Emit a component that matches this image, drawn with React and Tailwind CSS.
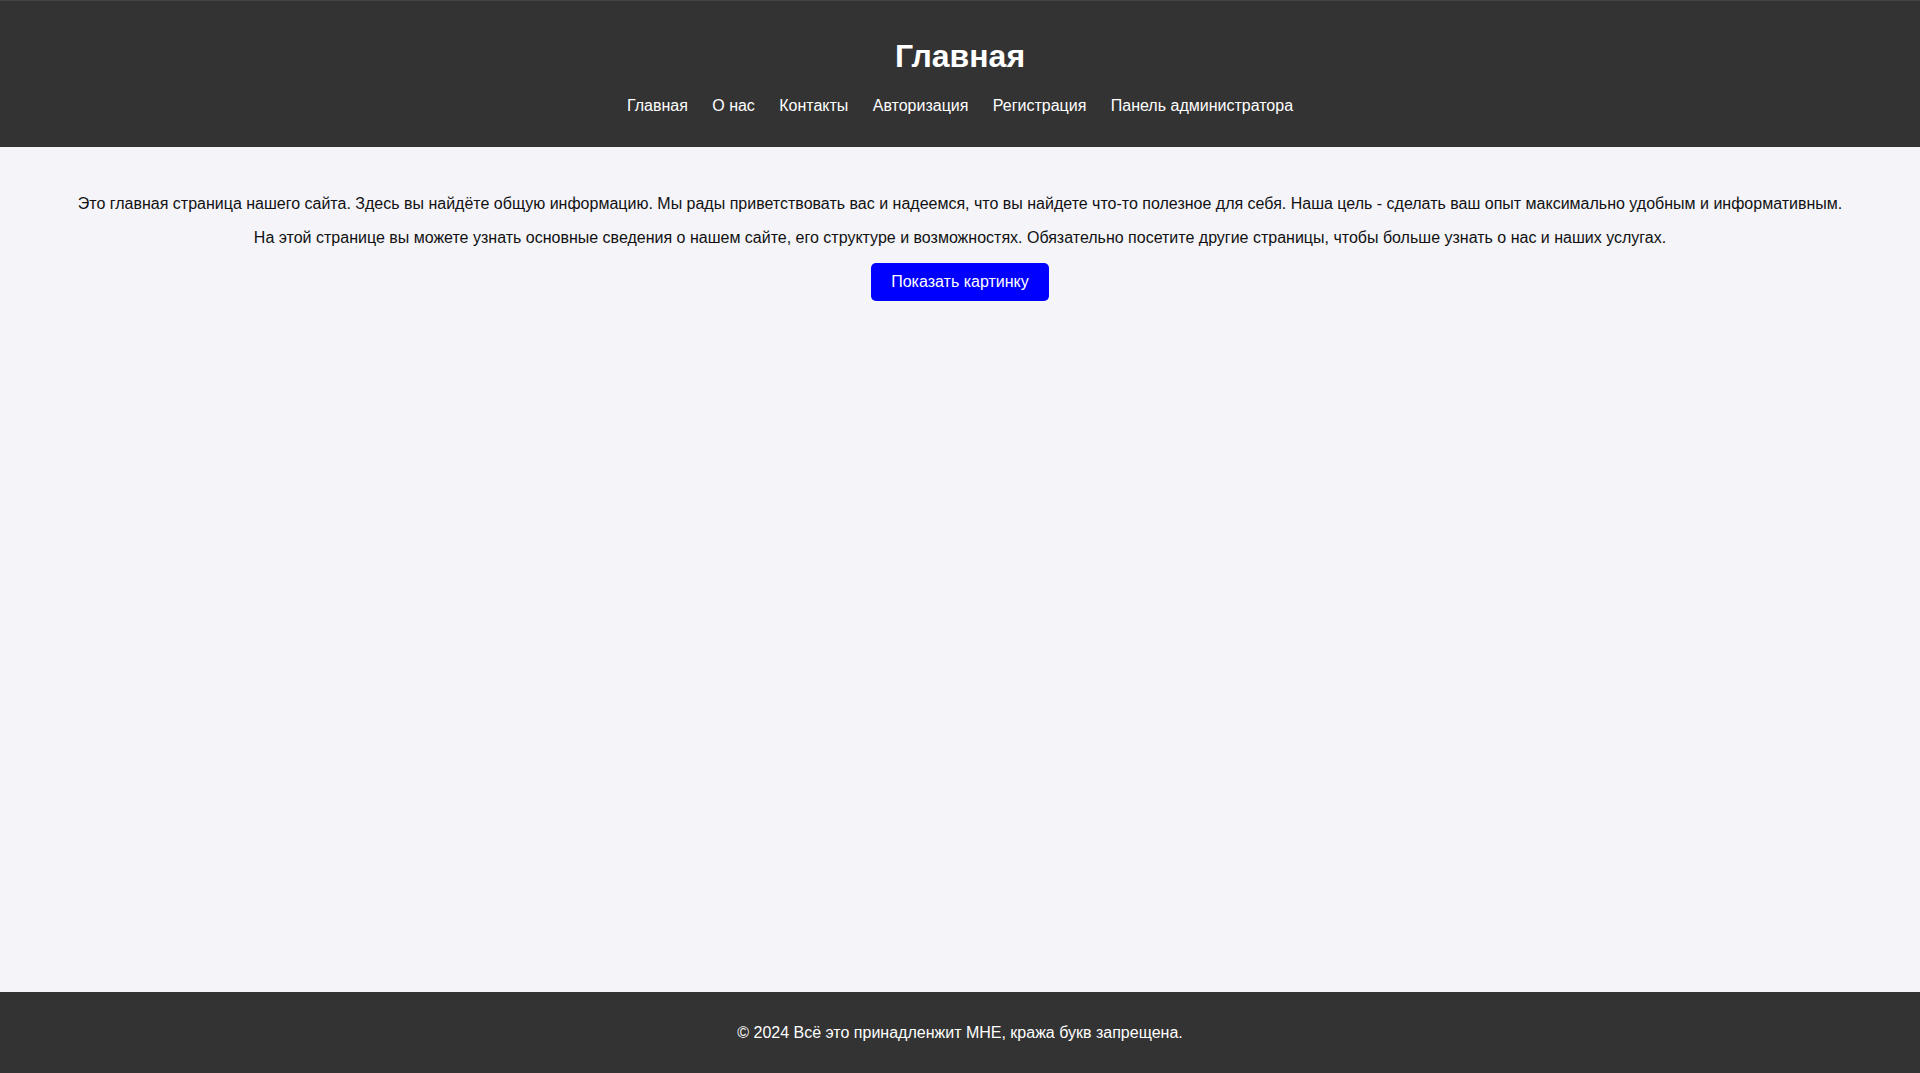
export default function App() {
  const links = ["Главная", "О нас", "Контакты", "Авторизация", "Регистрация", "Панель администратора"];
  return (
    <div className="min-h-screen flex flex-col bg-[#f4f4f9] text-[#111] text-[16px]" style={{ fontFamily: '"Liberation Sans", Arial, sans-serif' }}>
      <header className="h-[147px] bg-[#333333] border-t border-[#454545] text-white text-center pt-[37px]">
        <h1 className="text-[32px] font-bold leading-[37px]">Главная</h1>
        <nav className="mt-[22px]">
          <ul className="flex justify-center gap-[24.4px] leading-[18px]">
            {links.map((l) => (
              <li key={l}><a href="#" className="text-white">{l}</a></li>
            ))}
          </ul>
        </nav>
      </header>
      <main className="flex-1 px-[20px] pt-[48px] text-center">
        <p className="leading-[18px] mb-[16px]">Это главная страница нашего сайта. Здесь вы найдёте общую информацию. Мы рады приветствовать вас и надеемся, что вы найдете что-то полезное для себя. Наша цель - сделать ваш опыт максимально удобным и информативным.</p>
        <p className="leading-[18px] mb-[16px]">На этой странице вы можете узнать основные сведения о нашем сайте, его структуре и возможностях. Обязательно посетите другие страницы, чтобы больше узнать о нас и наших услугах.</p>
        <button className="bg-[#0000ff] text-white px-[20px] py-[10px] leading-[18px] rounded-[5px]">Показать картинку</button>
      </main>
      <footer className="h-[81px] bg-[#333333] text-white text-center pt-[32px] leading-[18px]">
        <p>© 2024 Всё это принадленжит МНЕ, кража букв запрещена.</p>
      </footer>
    </div>
  );
}
